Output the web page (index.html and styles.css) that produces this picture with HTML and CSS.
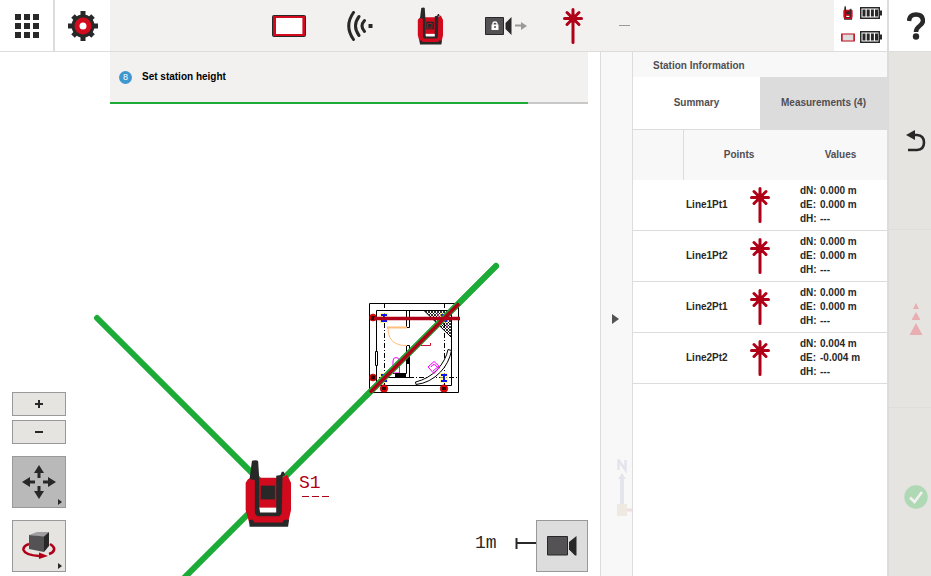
FILE: index.html
```html
<!DOCTYPE html>
<html lang="en">
<head>
<meta charset="utf-8">
<title>Station Setup</title>
<link rel="stylesheet" href="styles.css">
</head>
<body>
<svg class="defs" aria-hidden="true">
  <symbol id="station" viewBox="75 56 143 208">
    <path d="M84 117L93 112H187L203 103 215 127V211L206 250H88L77 211V127Z" fill="#d20a1e"/>
    <path d="M118 203H172V220H118Z" fill="#fff"/>
    <path d="M96 61Q98 59 106 59 114 59 115 62L118 110V202L121 218H170V106L183 104 187 94H193L197 104 189 108 187 220 180 229H112L105 220V120L89 116Z" fill="#282828"/>
    <path d="M87 240H99L103 248H189L193 240H209L206 261H89Z" fill="#282828"/>
    <path d="M123 136H166V178H123Z" fill="#282828"/>
  </symbol>
  <symbol id="prism" viewBox="0 0 20 36">
    <path d="M10 1.500V34.500M1.500 10.500H18.500M4 4.500L16 16.500M16 4.500L4 16.500" stroke="#b00018" stroke-width="3" stroke-linecap="round" fill="none"/>
    <circle cx="10" cy="10.500" r="4" fill="#b00018"/>
  </symbol>
  <symbol id="battery" viewBox="0 0 22 12">
    <path d="M.75 .75H19.250V11.250H.75Z" fill="#fff" stroke="#282828" stroke-width="1.500"/>
    <path d="M20 3.500H22V8.500H20ZM2.500 2.500H5.500V9.500H2.500ZM6.700 2.500H9.700V9.500H6.700ZM10.900 2.500H13.900V9.500H10.900ZM15 2.500H18V9.500H15Z" fill="#282828"/>
  </symbol>
  <symbol id="beam" viewBox="0 0 8 10">
    <path d="M0 0H8V10H0Z" fill="#fff06a" opacity=".6"/>
    <path d="M1 2H7M1 8H7M4 2V8" stroke="#0a14f0" stroke-width="2"/>
  </symbol>
</svg>

<header class="topbar">
  <button class="home" aria-label="Apps">
    <svg width="24" height="24" viewBox="0 0 24 24" fill="#282828"><path d="M0 0H6V6H0ZM9 0H15V6H9ZM18 0H24V6H18ZM0 9H6V15H0ZM9 9H15V15H9ZM18 9H24V15H18ZM0 18H6V24H0ZM9 18H15V24H9ZM18 18H24V24H18Z"/></svg>
  </button>
  <button class="settings" aria-label="Settings">
    <svg width="30" height="30" viewBox="-15 -15 30 30">
      <circle r="11.500" fill="#282828"/>
      <path d="M0-15V15M-15 0H15M-10-10L10 10M10-10L-10 10" stroke="#282828" stroke-width="5"/>
      <circle r="6" fill="#fff" stroke="#d20a1e" stroke-width="5"/>
    </svg>
  </button>
  <nav class="toolbar" aria-label="Device status">
    <button class="tool" aria-label="Tablet"><svg width="34" height="22" viewBox="0 0 34 22"><rect x="0" y="0" width="34" height="22" rx="2" fill="#282828"/><rect x="1" y="1" width="32" height="20" rx="1" fill="#d20a1e"/><path d="M4 3H30V19H4Z" fill="#fff"/><path d="M30 3H31V19H30Z" fill="#e06a78"/></svg></button>
    <button class="tool" aria-label="Connection"><svg width="26" height="30" viewBox="0 0 26 30" fill="none" stroke="#282828" stroke-width="3" stroke-linecap="round"><path d="M6.500 1.500Q-3 15 6.500 28.500M12 5.500Q5 15 12 24.500M17.500 9.500Q12.500 15 17.500 20.500"/><path d="M21.500 13H25.500V17H21.500Z" fill="#282828" stroke="none"/></svg></button>
    <button class="tool" aria-label="Station"><svg width="27" height="38" viewBox="0 0 27 38"><use href="#station" width="27" height="38"/><path d="M10.500 16.500H15V21H10.500Z" fill="none" stroke="#b40c1c"/></svg></button>
    <button class="tool" aria-label="Camera lock"><svg width="50" height="20" viewBox="0 0 50 20"><path d="M8.500 1.500H26.500V18.500H8.500Z" fill="#545254" stroke="#282828"/><path d="M34.500 1V19L28.500 13V7Z" fill="#282828"/><path d="M14.500 8.500H21.500V14H14.500Z" fill="#fff"/><path d="M16 9V7.500Q16 6 18 6T20 7.500V9" fill="none" stroke="#fff" stroke-width="1.300"/><circle cx="18" cy="11" r="1" fill="#545254"/><path d="M38 9.500H45" stroke="#9a9898" stroke-width="2"/><path d="M44 6L50 10 44 14Z" fill="#9a9898"/></svg></button>
    <button class="tool" aria-label="Target"><svg width="20" height="36"><use href="#prism"/></svg></button>
    <span class="dash"></span>
  </nav>
  <div class="power">
    <svg width="10" height="14"><use href="#station"/></svg>
    <svg width="22" height="12"><use href="#battery"/></svg>
    <svg width="14" height="9" viewBox="0 0 14 9"><path d="M1 1H13V8H1Z" fill="#ddd" stroke="#cc5560" stroke-width="1.500"/><path d="M.75 1V8M13.250 1V8" stroke="#c0101f" stroke-width="1.200"/></svg>
    <svg width="22" height="12"><use href="#battery"/></svg>
  </div>
  <button class="help" aria-label="Help">
    <svg width="18" height="28" viewBox="0 0 18 28"><path d="M2 9Q2.500 2.500 9 2.500T16 8.500Q16 11.500 12.500 14T9 20" fill="none" stroke="#282828" stroke-width="4.500"/><circle cx="9" cy="24.500" r="3.200" fill="#282828"/></svg>
  </button>
</header>

<main class="workspace">
  <section class="map" aria-label="Map">
    <svg class="canvas" viewBox="0 52 600 524" preserveAspectRatio="xMinYMin slice">
      <defs>
        <pattern id="hatch" width="3" height="3" patternUnits="userSpaceOnUse"><path d="M0 0L3 3M3 0L0 3" stroke="#000" stroke-width=".8"/></pattern>
      </defs>
      <path d="M97 318L266 487M496 266L180 582" stroke="#1cab37" stroke-width="6" stroke-linecap="round"/>
      <g fill="none" stroke="#000">
        <path d="M369.500 303.500H458.500V392.500H369.500ZM376.500 310.500H451.500V385.500H376.500Z"/>
        <path d="M384.500 303V392M444.500 303V392M369 377.500H458" stroke-dasharray="5 2 1 2"/>
        <path d="M424 310.500H451.500V337.500Z" fill="url(#hatch)"/>
        <path d="M406.500 310.500H409.500V327.500H406.500ZM409.500 345.500V377.500H384M406.500 345.500V373.500H393M406.500 345.500H409.500"/>
        <path d="M375.500 351.500H377.500V365.500H375.500Z" fill="#fff"/>
        <path d="M448 349.500L451.500 350.500Q449 363 440.500 372 430 383 416 384.500L415.500 382Q428 379 437 370 446 360 448 349.500Z" fill="#fff"/>
        <path d="M388 328Q388 340 396 343.500 401 346 407 345.500" stroke="#ffbd7a"/>
        <path d="M387 327.500H407" stroke="#ffbd7a" stroke-width="2"/>
        <path d="M393 373V361Q393 357.500 396 357.500T399.500 361V373ZM428 367L434 361.500 440 367 434 373.500ZM431 367Q434 362 437 367M433 371L439 366" stroke="#f0f"/>
        <path d="M421 345.500H430.500V343" stroke="#c8102e"/>
        <path d="M437 313L440 318M446 315V321M447 324V328" stroke="#c050b0"/>
      </g>
      <path d="M407 356H410V364H407ZM395 373H406V377H395Z"/>
      <g fill="#e60000" stroke="#900" stroke-width=".6">
        <circle cx="373" cy="317.500" r="3.500"/><circle cx="373" cy="377.500" r="3.500"/><circle cx="384" cy="388.500" r="3.800"/><circle cx="444" cy="388.500" r="3.800"/>
      </g>
      <path d="M371 316H375V320H371ZM371 375.500H375V379.500H371ZM382 387H386V390H382ZM442 387H446V390H442Z" fill="#300"/>
      <use href="#beam" x="380" y="313" width="8" height="10"/>
      <use href="#beam" x="440" y="313" width="8" height="10"/>
      <use href="#beam" x="380" y="373" width="8" height="10"/>
      <use href="#beam" x="440" y="373" width="8" height="10"/>
      <path d="M496 266L366 396" stroke="#1cab37" stroke-width="6" stroke-linecap="round"/>
      <path d="M374 318.500H460M370 392.500L459 303.500" stroke="#b00018" stroke-width="3.500"/>
      <use href="#station" x="245" y="459" width="47" height="69"/>
      <text class="cad cad-red" x="299" y="488">S1</text>
      <path d="M302 496.500H329" stroke="#b00018" stroke-dasharray="7 3"/>
      <text class="cad" x="475" y="548">1m</text>
      <path d="M516.500 538V549M517 543H536" stroke="#282828" stroke-width="2"/>
    </svg>

    <div class="task">
      <p class="task-text"><span class="step">8</span>Set station height</p>
      <progress class="task-progress" value="7" max="8" aria-label="Setup progress"></progress>
    </div>

    <div class="map-tools">
      <button class="map-btn zoom" aria-label="Zoom in"><svg width="8" height="8"><path d="M4 0V8M0 4H8" stroke="#282828" stroke-width="2"/></svg></button>
      <button class="map-btn zoom" aria-label="Zoom out"><svg width="8" height="8"><path d="M0 4H8" stroke="#282828" stroke-width="2"/></svg></button>
      <button class="map-btn mode active" aria-label="Pan">
        <svg width="34" height="34" viewBox="-17 -17 34 34" fill="#282828"><path id="arm" d="M0-17L5-9H1.500V-4H-1.500V-9H-5Z"/><use href="#arm" transform="rotate(90)"/><use href="#arm" transform="rotate(180)"/><use href="#arm" transform="rotate(270)"/></svg>
        <span class="more"></span>
      </button>
      <button class="map-btn mode" aria-label="Rotate view">
        <svg width="34" height="30" viewBox="0 0 34 30"><path d="M7 13Q1 15 1.500 19 3 24 17 25M28 13Q33 16 32 19 31 22 27 23" fill="none" stroke="#b00018" stroke-width="2.600"/><path d="M17 21.500L26 25 17 28Z" fill="#b00018"/><path d="M7 4L15 1H27L22 6Z" fill="#a09ea0"/><path d="M7 4L22 5.500V21L7 18Z" fill="#545254"/><path d="M22 5.500L27 1V15L22 21Z" fill="#282828"/></svg>
        <span class="more"></span>
      </button>
    </div>
    <button class="map-btn camera" aria-label="Camera"><svg width="30" height="20" viewBox="0 0 30 20"><path d="M.5 .5H20.500V19H.5Z" fill="#545254" stroke="#282828"/><path d="M29.500 0V19.500H28L22 13.500V6Z" fill="#282828"/></svg></button>
  </section>

  <button class="collapse" aria-label="Collapse panel">
    <svg width="7" height="10"><path d="M0 0L7 5 0 10Z" fill="#545254"/></svg>
    <svg class="compass" width="15" height="58" viewBox="0 0 15 58"><path d="M1.500 11V1L8.500 11V1" fill="none" stroke="#e4e4ec" stroke-width="2.500"/><path d="M5 14L9 20H7V46H3V20H1Z" fill="#e4e4ec"/><path d="M0 45H10V57H0Z" fill="#eeeae2"/><path d="M10 51H15" stroke="#f3dde0" stroke-width="3"/></svg>
  </button>

  <section class="panel">
    <h2 class="panel-title">Station Information</h2>
    <div class="tabs" role="tablist">
      <button class="tab" role="tab" aria-selected="false">Summary</button>
      <button class="tab selected" role="tab" aria-selected="true">Measurements (4)</button>
    </div>
    <table class="points">
      <thead><tr><th class="col-mark"></th><th class="col-point">Points</th><th>Values</th></tr></thead>
      <tbody>
        <tr><td></td><td><div class="point"><span>Line1Pt1</span><svg width="20" height="36"><use href="#prism"/></svg></div></td><td><dl><dt>dN:</dt><dd>0.000 m</dd><dt>dE:</dt><dd>0.000 m</dd><dt>dH:</dt><dd>---</dd></dl></td></tr>
        <tr><td></td><td><div class="point"><span>Line1Pt2</span><svg width="20" height="36"><use href="#prism"/></svg></div></td><td><dl><dt>dN:</dt><dd>0.000 m</dd><dt>dE:</dt><dd>0.000 m</dd><dt>dH:</dt><dd>---</dd></dl></td></tr>
        <tr><td></td><td><div class="point"><span>Line2Pt1</span><svg width="20" height="36"><use href="#prism"/></svg></div></td><td><dl><dt>dN:</dt><dd>0.000 m</dd><dt>dE:</dt><dd>0.000 m</dd><dt>dH:</dt><dd>---</dd></dl></td></tr>
        <tr><td></td><td><div class="point"><span>Line2Pt2</span><svg width="20" height="36"><use href="#prism"/></svg></div></td><td><dl><dt>dN:</dt><dd>0.004 m</dd><dt>dE:</dt><dd>-0.004 m</dd><dt>dH:</dt><dd>---</dd></dl></td></tr>
      </tbody>
    </table>
  </section>

  <aside class="actions">
    <button class="action" aria-label="Back"><svg width="20" height="22" viewBox="0 0 20 22"><path d="M6 5H11Q18 5.500 18 12.500T11 20H2" fill="none" stroke="#282828" stroke-width="2.600"/><path d="M0 5L9 0V10Z" fill="#282828"/></svg></button>
    <button class="action" aria-label="Measure" disabled><svg width="14" height="32" viewBox="0 0 14 32"><path d="M7 0L10 6H4ZM7 9L11.500 17H2.500ZM7 20L13.500 32H.5Z" fill="#e8aeb2"/></svg></button>
    <button class="action" aria-label="Confirm" disabled><svg width="24" height="24" viewBox="0 0 24 24"><circle cx="12" cy="12" r="11.700" fill="#afd8b5"/><path d="M6 12.500L10.500 17 18 7" fill="none" stroke="#f3f1f0" stroke-width="2.600"/></svg></button>
  </aside>
</main>
</body>
</html>
```
FILE: styles.css
```css
* { box-sizing: border-box; }

:root {
  --line: #dcdcdc;
  --soft: #f3f1f0;
  --pale: #f8f8f8;
  --stone: #e5e4e0;
  --ink: #282828;
  --label: #504e52;
}

body {
  margin: 0;
  height: 100vh;
  display: flex;
  flex-direction: column;
  overflow: hidden;
  background: #fff;
  color: var(--ink);
  font: bold 10px/14px "Liberation Sans", Arial, sans-serif;
}

svg { display: block; flex: none; }
.defs { position: absolute; width: 0; height: 0; }

button {
  display: flex;
  align-items: center;
  justify-content: center;
  margin: 0;
  padding: 0;
  border: 0;
  background: none;
  color: inherit;
  font: inherit;
}

/* Top bar */
.topbar {
  flex: none;
  display: flex;
  height: 52px;
  border-bottom: 1px solid var(--line);
}
.home { width: 55px; border-right: 2px solid var(--line); }
.settings { width: 55px; }
.toolbar {
  flex: 1;
  display: flex;
  align-items: center;
  padding-left: 143px;
  background: var(--soft);
}
.tool { width: 71px; height: 51px; }
.dash { width: 11px; height: 1px; margin-left: 11px; background: #999; }
.power {
  display: grid;
  grid-template-columns: 14px 22px;
  gap: 0 5px;
  place-content: stretch center;
  place-items: center;
  width: 53px;
  padding: 0 0 2px 1px;
}
.help { width: 44px; border-left: 2px solid var(--line); padding-left: 12px; }

/* Work area */
.workspace {
  flex: 1;
  min-height: 0;
  display: grid;
  grid-template-columns: minmax(0, 1fr) 33px 254px 44px;
}

.map { position: relative; overflow: hidden; }
.canvas { position: absolute; inset: 0; width: 100%; height: 100%; }
.cad { font: 18px "Liberation Mono", monospace; fill: var(--ink); }
.cad-red { fill: #b00018; }

.task { position: relative; margin: 0 12px 0 110px; background: var(--soft); }
.task-text {
  display: flex;
  align-items: center;
  gap: 10px;
  height: 50px;
  margin: 0;
  padding-left: 9px;
  color: #000;
}
.step {
  width: 13px;
  height: 13px;
  border-radius: 50%;
  background: #3f97cf;
  color: #fff;
  font-size: 9px;
  font-weight: 400;
  line-height: 13px;
  text-align: center;
}
.task-progress {
  display: block;
  width: 100%;
  height: 2px;
  border: 0;
  appearance: none;
  background: #c8c8c8;
}
.task-progress::-webkit-progress-bar { background: #c8c8c8; }
.task-progress::-webkit-progress-value { background: #1cab37; }

.map-tools {
  position: absolute;
  left: 12px;
  bottom: 4px;
  display: flex;
  flex-direction: column;
  width: 54px;
}
.map-btn { position: relative; border: 1px solid #999; background: var(--stone); }
.zoom { height: 24px; margin-bottom: 4px; }
.mode { height: 52px; margin-top: 8px; }
.mode + .mode { margin-top: 12px; }
.mode.active { background: #b9b9b9; }
.more {
  position: absolute;
  right: 3px;
  bottom: 2px;
  border: 3px solid transparent;
  border-left: 4px solid var(--ink);
  border-right: 0;
}
.camera { position: absolute; right: 12px; bottom: 4px; width: 52px; height: 52px; background: #ddd; }

.collapse {
  position: relative;
  padding: 10px 2px 0 0;
  border: solid var(--line);
  border-width: 0 1px;
  background: var(--pale);
}
.compass { position: absolute; right: 0; bottom: 59px; }

/* Station panel */
.panel-title {
  margin: 0;
  padding: 7px 20px 4px;
  background: var(--pale);
  color: var(--label);
  font-size: 10px;
}
.tabs { display: flex; border-bottom: 1px solid var(--line); color: var(--label); }
.tab { flex: 1; height: 52px; }
.tab.selected { background: var(--line); }

.points { width: 100%; border-collapse: separate; border-spacing: 0; table-layout: fixed; }
.points th {
  height: 50px;
  padding: 0;
  background: var(--pale);
  color: var(--label);
}
.points .col-mark { width: 51px; border-right: 1px solid var(--line); }
.col-point { width: 110px; }
.points td { height: 51px; padding: 0; border-bottom: 1px solid var(--line); }
.point { display: flex; align-items: center; justify-content: space-between; padding: 0 24px 0 2px; }
dl {
  display: grid;
  grid-template-columns: 20px 1fr;
  margin: 0;
  padding-left: 6px;
}
dd { margin: 0; }

/* Action column */
.actions {
  overflow: hidden;
  border-left: 2px solid var(--line);
  background: var(--stone);
}
.action { width: 100%; height: 178px; padding-left: 12px; border-bottom: 1px solid #dddddb; }
```
